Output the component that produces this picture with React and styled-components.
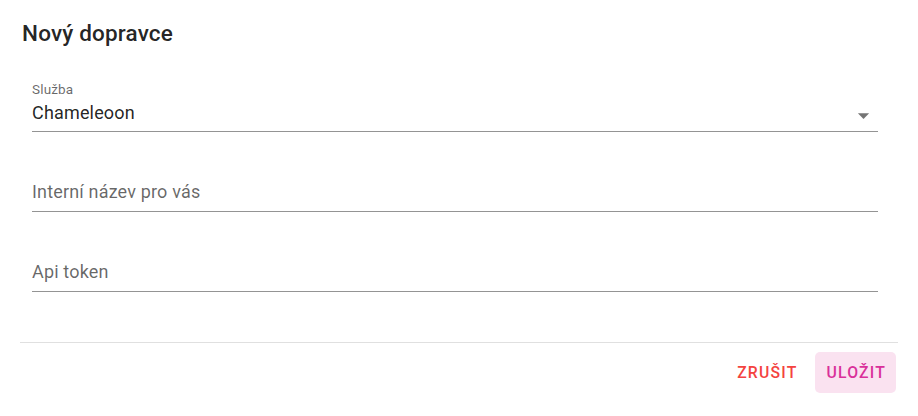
import React from "react";
import styled, { createGlobalStyle } from "styled-components";

const Global = createGlobalStyle`
  html, body { margin: 0; padding: 0; background: #ffffff; }
  body { font-family: Roboto, "Noto Sans", Arial, sans-serif; }
  * { box-sizing: border-box; }
`;

const Dialog = styled.div`
  width: 918px;
  height: 416px;
  background: #ffffff;
  display: flex;
  flex-direction: column;
`;

const Title = styled.h2`
  margin: 0;
  padding: 15px 22px 0;
  font-size: 22.5px;
  font-weight: 500;
  line-height: 36px;
  letter-spacing: 0.17px;
  color: rgba(0, 0, 0, 0.87);
`;

const Form = styled.div`
  display: flex;
  flex-direction: column;
  gap: 26px;
  padding: 27px 40px 0 32px;
`;

const Field = styled.div`
  position: relative;
  display: flex;
  flex-direction: column;
`;

const Label = styled.div`
  height: 20px;
  padding-top: 2px;
  font-size: 13.5px;
  line-height: 18px;
  color: rgba(0, 0, 0, 0.6);
  letter-spacing: 0.17px;
`;

const InputRow = styled.div`
  position: relative;
  height: 34px;
  padding: ${(p) => (p.$placeholder ? "2px 0 8px" : "2px 0 5px")};
  line-height: ${(p) => (p.$placeholder ? "23px" : "26px")};
  font-size: 18px;
  letter-spacing: 0.17px;
  color: ${(p) => (p.$placeholder ? "rgba(0, 0, 0, 0.6)" : "rgba(0, 0, 0, 0.87)")};
  border-bottom: 1px solid rgba(0, 0, 0, 0.42);
`;

const Arrow = styled.svg`
  position: absolute;
  right: 1px;
  top: 4px;
  width: 27px;
  height: 27px;
  fill: rgba(0, 0, 0, 0.54);
`;

const Divider = styled.hr`
  margin: 50px 20px 0;
  border: none;
  border-top: 1px solid #e0e0e0;
  height: 0;
`;

const Actions = styled.div`
  display: flex;
  justify-content: flex-end;
  gap: 8px;
  padding: 9px 22px 0;
`;

const Button = styled.button`
  height: 41px;
  padding: 0 10px 0 11px;
  border: none;
  border-radius: 5px;
  font-family: Roboto, "Noto Sans", Arial, sans-serif;
  font-size: 15.75px;
  font-weight: 500;
  letter-spacing: 1.2px;
  text-transform: uppercase;
  cursor: pointer;
  background: ${(p) => (p.$primary ? "#fae2f0" : "transparent")};
  color: ${(p) => (p.$primary ? "#d9309a" : "#f4433f")};
`;

export default function App() {
  return (
    <>
      <Global />
      <Dialog>
        <Title>Nový dopravce</Title>
        <Form>
          <Field>
            <Label>Služba</Label>
            <InputRow>
              Chameleoon
              <Arrow viewBox="0 0 24 24">
                <path d="M7 10l5 5 5-5z" />
              </Arrow>
            </InputRow>
          </Field>
          <Field>
            <Label />
            <InputRow $placeholder>Interní název pro vás</InputRow>
          </Field>
          <Field>
            <Label />
            <InputRow $placeholder>Api token</InputRow>
          </Field>
        </Form>
        <Divider />
        <Actions>
          <Button>Zrušit</Button>
          <Button $primary>Uložit</Button>
        </Actions>
      </Dialog>
    </>
  );
}
